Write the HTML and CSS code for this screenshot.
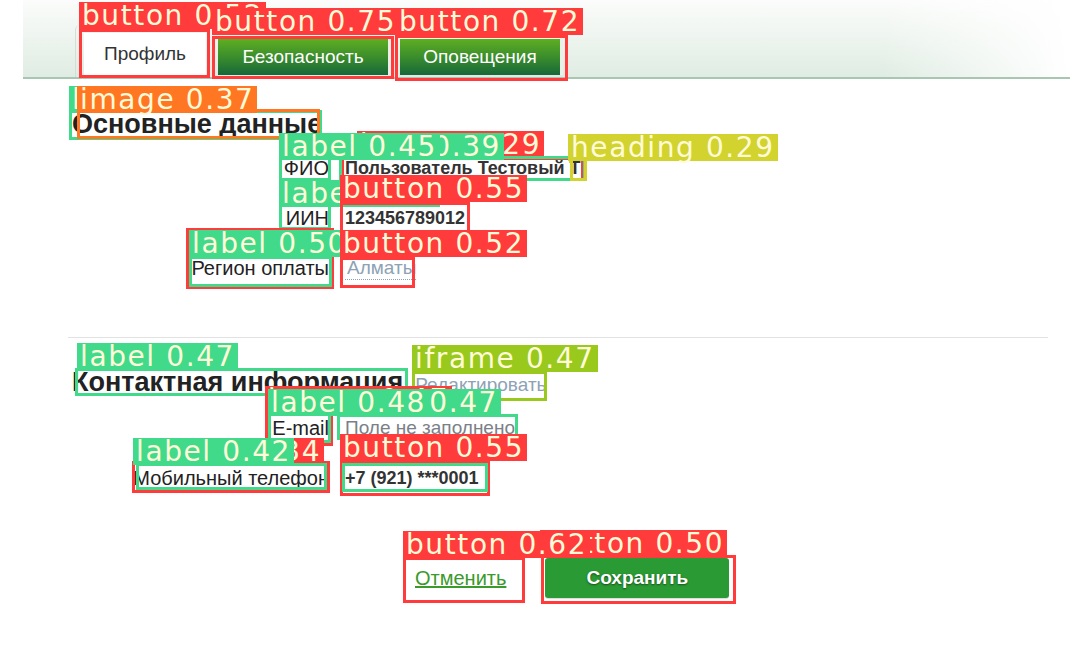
FILE: index.html
```html
<!DOCTYPE html>
<html lang="ru">
<head>
<meta charset="utf-8">
<title>Профиль</title>
<link rel="stylesheet" href="styles.css">
</head>
<body>
<div class="page">
  <header class="tabs-bar">
    <nav class="tabs">
      <a class="tab tab-active">Профиль</a>
      <a class="tab tab-green">Безопасность</a>
      <a class="tab tab-green">Оповещения</a>
    </nav>
  </header>

  <section class="section section-main">
    <h2 class="sec-title">Основные данные</h2>
    <div class="fields">
      <div class="field"><span class="lbl">ФИО</span><span class="val val-bold">Пользователь Тестовый Т</span></div>
      <div class="field"><span class="lbl">ИИН</span><span class="val val-bold">123456789012</span></div>
      <div class="field"><span class="lbl">Регион оплаты</span><span class="val val-link">Алматы</span></div>
    </div>
  </section>

  <hr class="divider">

  <section class="section section-contact">
    <div class="sec-head">
      <h2 class="sec-title">Контактная информация</h2>
      <a class="edit-link">Редактировать</a>
    </div>
    <div class="fields">
      <div class="field"><span class="lbl">E-mail</span><span class="val val-empty">Поле не заполнено</span></div>
      <div class="field"><span class="lbl">Мобильный телефон</span><span class="val val-bold">+7 (921) ***0001</span></div>
    </div>
  </section>

  <div class="actions">
    <a class="cancel">Отменить</a>
    <button class="save">Сохранить</button>
  </div>

  <div class="ann">
    <div class="box c-red" style="left:79px;top:29px;width:131px;height:49px"></div>
    <div class="tag c-red" style="left:79px;top:2px">button 0.52</div>
    <div class="box c-red" style="left:212px;top:36px;width:182px;height:43px"></div>
    <div class="tag c-red" style="left:212px;top:8px">button 0.75</div>
    <div class="box c-red" style="left:395px;top:35px;width:173px;height:46px"></div>
    <div class="tag c-red" style="left:396px;top:8px">button 0.72</div>

    <div class="box c-green" style="left:69px;top:110px;width:253px;height:30px"></div>
    <div class="tag c-green" style="left:69px;top:86px">label 0.31</div>
    <div class="box c-orange" style="left:77px;top:109px;width:243px;height:30px"></div>
    <div class="tag c-orange" style="left:77px;top:86px">image 0.37</div>

    <div class="box c-red" style="left:341px;top:157px;width:243px;height:24px"></div>
    <div class="tag c-red" style="left:357px;top:131px">button 0.29</div>
    <div class="box c-green" style="left:339px;top:156px;width:247px;height:25px"></div>
    <div class="tag c-green" style="left:343px;top:133px">label 0.39</div>
    <div class="box c-green" style="left:279px;top:156px;width:52px;height:25px"></div>
    <div class="tag c-green" style="left:279px;top:133px">label 0.45</div>
    <div class="box c-yellow" style="left:570px;top:157px;width:17px;height:24px"></div>
    <div class="tag c-yellow" style="left:568px;top:134px">heading 0.29</div>

    <div class="box c-green" style="left:279px;top:204px;width:52px;height:26px"></div>
    <div class="tag c-green" style="left:279px;top:180px">label 0.33</div>
    <div class="box c-red" style="left:340px;top:202px;width:130px;height:31px"></div>
    <div class="tag c-red" style="left:340px;top:175px">button 0.55</div>

    <div class="box c-red" style="left:186px;top:228px;width:148px;height:61px"></div>
    <div class="box c-green" style="left:189px;top:256px;width:143px;height:31px"></div>
    <div class="tag c-green" style="left:189px;top:230px">label 0.50</div>
    <div class="box c-red" style="left:340px;top:257px;width:75px;height:31px"></div>
    <div class="tag c-red" style="left:340px;top:230px">button 0.52</div>

    <div class="box c-green" style="left:75px;top:368px;width:333px;height:28px"></div>
    <div class="tag c-green" style="left:77px;top:343px">label 0.47</div>
    <div class="box c-lime" style="left:412px;top:371px;width:135px;height:30px"></div>
    <div class="tag c-lime" style="left:412px;top:345px">iframe 0.47</div>

    <div class="box c-red" style="left:265px;top:410px;width:68px;height:36px"></div>
    <div class="tag c-red" style="left:265px;top:386px">button 0.47</div>
    <div class="box c-green" style="left:337px;top:414px;width:181px;height:26px"></div>
    <div class="tag c-green" style="left:340px;top:389px">label 0.47</div>
    <div class="box c-green" style="left:268px;top:411px;width:63px;height:32px"></div>
    <div class="tag c-green" style="left:268px;top:389px">label 0.48</div>

    <div class="box c-red" style="left:132px;top:461px;width:198px;height:32px"></div>
    <div class="tag c-red" style="left:137px;top:438px">button 0.34</div>
    <div class="box c-green" style="left:136px;top:463px;width:191px;height:27px"></div>
    <div class="tag c-green" style="left:133px;top:438px">label 0.42</div>
    <div class="box c-red" style="left:340px;top:461px;width:150px;height:35px"></div>
    <div class="box c-green" style="left:342px;top:463px;width:146px;height:29px"></div>
    <div class="tag c-red" style="left:340px;top:434px">button 0.55</div>

    <div class="box c-red" style="left:541px;top:555px;width:195px;height:49px"></div>
    <div class="tag c-red" style="left:540px;top:530px">button 0.50</div>
    <div class="box c-red" style="left:403px;top:557px;width:122px;height:46px"></div>
    <div class="tag c-red" style="left:403px;top:531px">button 0.62</div>
  </div>
</div>
</body>
</html>
```

FILE: styles.css
```css
* { box-sizing: border-box; }
html, body { margin: 0; padding: 0; background: #fff; }
body {
  font-family: "Liberation Sans", Arial, sans-serif;
  color: #222;
  width: 1091px;
  height: 655px;
  overflow: hidden;
}
.page { position: relative; width: 1091px; height: 655px; }

/* tabs */
.tabs-bar {
  margin: 0 21px 0 23px;
  height: 79px;
  padding: 25px 0 0 52px;
  background:
    linear-gradient(to right, rgba(255,255,255,0) 82%, #fff 100%),
    linear-gradient(to bottom, #fbfcfb 0%, #eff5f0 45%, #dfece3 100%);
  border-bottom: 2px solid #a8c6b1;
}
.tabs {
  display: flex;
  align-items: flex-end;
  height: 52px;
  padding: 6px 0 0 8px;
  border-left: 1px solid #d5ddd7;
  border-top-left-radius: 5px;
  width: 500px;
}
.tab {
  display: flex;
  align-items: center;
  justify-content: center;
  font-size: 19px;
  text-decoration: none;
}
.tab-active {
  width: 122px;
  height: 44px;
  background: #fff;
  color: #333;
  margin-right: 12px;
  padding-bottom: 2px;
}
.tab-green {
  height: 36px;
  margin-bottom: 2px;
  color: #fff;
  background: linear-gradient(to bottom, #5eae22 0%, #3b8d2c 50%, #17683a 100%);
  border-right: 3px solid #e9f0ea;
}
.tab-green:nth-child(2) { width: 173px; margin-right: 9px; }
.tab-green:nth-child(3) { width: 163px; }

/* sections */
.section { padding-left: 72px; }
.section-main { padding-top: 30px; }
.sec-title {
  margin: 0;
  font-size: 27px;
  font-weight: bold;
  color: #222;
  line-height: 30px;
}
.fields { margin-left: -72px; }
.section-main .fields { margin-top: 18px; }
.field {
  display: grid;
  grid-template-columns: 329px auto;
  column-gap: 16px;
  height: 50px;
  align-items: start;
  font-size: 20px;
  line-height: 22px;
}
.lbl { text-align: right; color: #222; }
.val { justify-self: start; }
.val-bold { font-weight: bold; font-size: 18px; color: #333; }
.val-link {
  color: #8ea2b5;
  border-bottom: 1px dotted #8ea2b5;
  font-size: 19px;
  line-height: 22px;
  padding-left: 2px;
}
.val-empty { color: #7b8087; font-size: 19px; }

.divider {
  margin: 30px 43px 0 68px;
  border: 0;
  border-top: 1px solid #e2e2e2;
  height: 0;
}

.section-contact { padding-top: 29px; }
.sec-head { display: flex; align-items: baseline; gap: 12px; }
.edit-link { color: #8ea2b5; font-size: 19px; }
.section-contact .fields { margin-top: 20px; }

.actions {
  display: flex;
  align-items: center;
  padding-left: 415px;
  margin-top: 41px;
  gap: 39px;
}
.cancel {
  color: #3a9a2c;
  font-size: 20px;
  text-decoration: underline;
}
.save {
  width: 184px;
  height: 40px;
  border: 0;
  border-radius: 3px;
  background: #2a9a34;
  color: #fff;
  font-family: "Liberation Sans", Arial, sans-serif;
  font-weight: bold;
  font-size: 19px;
  text-shadow: 0 1px 2px rgba(0,0,0,0.5);
  box-shadow: 0 1px 1px rgba(0,0,0,0.15);
}

/* detection overlay */
.ann { position: absolute; left: 0; top: 0; width: 100%; height: 100%; pointer-events: none; }
.box { position: absolute; border: 3px solid; }
.tag {
  position: absolute;
  height: 27px;
  padding: 0 3px;
  font-family: "DejaVu Sans", sans-serif;
  font-weight: normal;
  font-size: 28px;
  line-height: 27px;
  letter-spacing: 1.6px;
  color: #fffbd8;
  white-space: nowrap;
}
.c-red { border-color: #ff3b3b; }
.tag.c-red { background: #ff3b3b; }
.c-green { border-color: #40da8a; }
.tag.c-green { background: #40da8a; }
.c-orange { border-color: #ff7722; }
.tag.c-orange { background: #ff7722; }
.c-yellow { border-color: #d2d32e; }
.tag.c-yellow { background: #d2d32e; }
.c-lime { border-color: #98c91c; }
.tag.c-lime { background: #98c91c; }
```
